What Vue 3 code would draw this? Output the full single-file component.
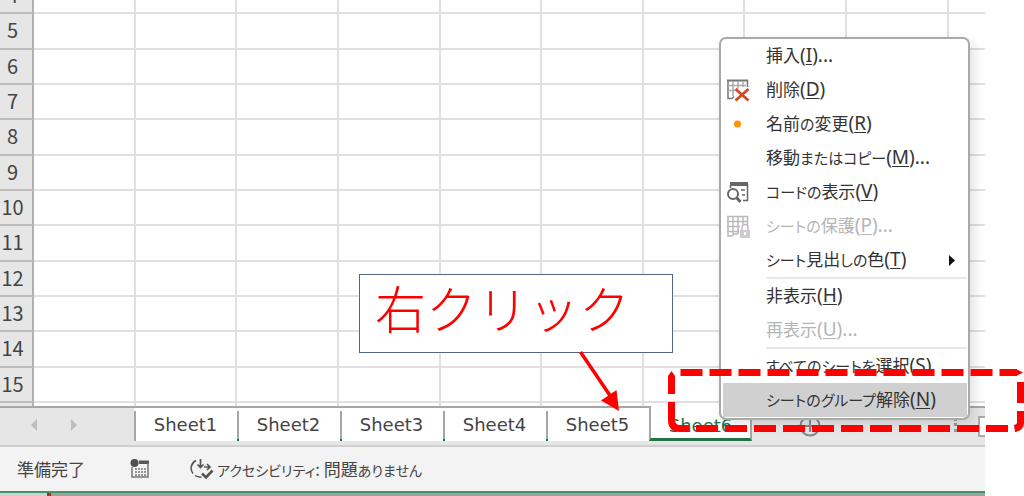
<template>
    <div class="page">
        <div class="excel-window">
            <!-- シート -->
            <div class="sheet">
                <table class="grid">
                    <colgroup>
                        <col class="col-header" />
                        <col v-for="c in 9" :key="c" class="col-cell" />
                        <col />
                    </colgroup>
                    <tbody>
                        <tr v-for="row in rows" :key="row">
                            <th scope="row">{{ row }}</th>
                            <td v-for="c in 10" :key="c"></td>
                        </tr>
                    </tbody>
                </table>
            </div>

            <!-- シート見出し -->
            <div class="tab-bar">
                <div class="tab-nav">
                    <button aria-label="前へ"><svg width="6" height="12"><path d="M6 0V12L0 6Z" fill="#bdbdbd" /></svg></button>
                    <button aria-label="次へ"><svg width="6" height="12"><path d="M0 0V12L6 6Z" fill="#bdbdbd" /></svg></button>
                </div>
                <button v-for="tab in tabs" :key="tab" class="tab" :class="{ active: tab === activeTab }" @click="activeTab = tab">{{ tab }}</button>
                <button class="add-tab" aria-label="新しいシート">
                    <svg width="22" height="22" fill="none" stroke="#888" stroke-width="2">
                        <circle cx="11" cy="11" r="9.5" />
                        <path d="M11 5V17M5 11H17" />
                    </svg>
                </button>
                <svg class="dots" width="3" height="14" fill="#999">
                    <path d="M0 0h3v3H0zM0 5h3v3H0zM0 11h3v3H0z" />
                </svg>
                <div class="scroll-end"></div>
            </div>

            <!-- ステータスバー -->
            <div class="status-bar">
                <span class="ready">準備完了</span>
                <svg class="macro-icon" width="20" height="20" viewBox="0 0 20 20">
                    <path d="M9 1.5H19V5H9Z" fill="#555" />
                    <path d="M2 8V18H18V4" fill="none" stroke="#777" stroke-width="1.5" />
                    <path d="M5 10H16M5 13H16M5 16H16" stroke="#777" stroke-width="1.5" stroke-dasharray="2 1" />
                    <circle cx="4.5" cy="4" r="4" fill="#505050" />
                </svg>
                <svg class="access-icon" width="24" height="22" viewBox="0 0 24 22" fill="none" stroke="#555">
                    <path d="M6 2.5A8.5 8.5 0 0 0 3 15.5M5 17.5Q8 19.5 11.5 19" stroke-width="1.5" />
                    <path d="M10.5 1V9M7.5 6.5L10.5 9.5L13.5 6.5M14 9H20M17 6L20 9L17 12" stroke-width="1.7" />
                    <path d="M12 15.5L16 19.5L22.5 12.5" stroke-width="2.6" />
                </svg>
                <span><span v-for="(part, i) in splitKana('アクセシビリティ: 問題ありません')" :key="i" :class="{ kana: part.kana }">{{ part.text }}</span></span>
            </div>
            <div class="desktop-strip"><i></i><b></b></div>
        </div>

        <!-- 右クリックメニュー -->
        <div class="context-menu" role="menu">
            <template v-for="item in menuItems" :key="item.key">
                <hr v-if="item.separator" />
                <button role="menuitem" class="menu-item" :class="{ selected: item.selected }" :disabled="item.disabled">
                    <span class="menu-icon">
                        <svg v-if="item.icon === 'delete'" width="24" height="24" viewBox="0 0 24 24" fill="none">
                            <path d="M1 2.5H22" stroke="#777" stroke-width="2" />
                            <path d="M2 2V20.5H6L8 18.5M21.5 2V9" stroke="#777" stroke-width="1.5" />
                            <path d="M2 7.5H20M2 12.5H9M7 3V18M12 3V11M17 3V9" stroke="#aaa" stroke-width="1.5" />
                            <path d="M9.5 11L22.5 22.5M22.5 11L9.5 22.5" stroke="#d24726" stroke-width="2.8" />
                        </svg>
                        <svg v-else-if="item.icon === 'dot'" width="24" height="24" viewBox="0 0 24 24">
                            <circle cx="11.5" cy="12" r="3.5" fill="#ff9200" />
                        </svg>
                        <svg v-else-if="item.icon === 'code'" width="24" height="24" viewBox="0 0 24 24" fill="none" stroke="#666">
                            <path d="M4 4H22" stroke-width="4" />
                            <path d="M21.5 4V20.5H17M4.5 5V8M15 10H19M16 15H19" stroke-width="1.5" />
                            <circle cx="7" cy="14" r="5" stroke-width="2" />
                            <path d="M10.5 17.5L14.5 22" stroke-width="3" />
                        </svg>
                        <svg v-else-if="item.icon === 'protect'" width="24" height="24" viewBox="0 0 24 24" fill="none" stroke="#bcb7bd">
                            <path d="M1 2.5H22M1 7.5H22M1 12.5H14M1 17.5H13M2 2V22H6L8 20H12M7 2V20M12 2V20M17 2V10M21.5 2V11" stroke-width="1.5" />
                            <path d="M16 16V13.5A3 3 0 0 1 22 13.5V16" stroke-width="1.5" />
                            <rect x="14" y="16" width="10" height="8" fill="#cfc9d0" stroke="none" />
                            <path d="M19 18V21" stroke="#fff" stroke-width="2" />
                        </svg>
                    </span>
                    <span class="menu-label"><span v-for="(part, i) in splitKana(item.label)" :key="i" :class="{ kana: part.kana }">{{ part.text }}</span><span class="access-key">(<u>{{ item.key }}</u>){{ item.dots ? '...' : '' }}</span></span>
                    <svg v-if="item.submenu" class="submenu-arrow" width="6" height="11"><path d="M0 0V11L6 5.5Z" fill="#111" /></svg>
                </button>
            </template>
        </div>

        <!-- 説明の吹き出し -->
        <div class="callout">右クリック</div>
        <svg class="annotations" width="1024" height="496" viewBox="0 0 1024 496" fill="none" stroke="#f00">
            <path d="M580.5 352L611 397" stroke-width="3.5" />
            <path d="M619 411L616.5 390L601 400.5Z" fill="#f00" stroke="none" />
            <g stroke-width="7">
                <path d="M680.5 372.5H1017" stroke-dasharray="22 7" />
                <path d="M696 428.5H1008" stroke-dasharray="22 7" />
                <path d="M1020.5 382V403M1020.5 411V423Q1020.5 427.5 1014.5 428.5" />
                <path d="M671.5 394V376M671.5 402V420Q671.5 428.5 680 428.5H689" />
            </g>
            <path d="M668 376L671.5 371L675 376ZM1016 369L1023 372.5L1016 376Z" fill="#f00" stroke="none" />
        </svg>
    </div>
</template>

<script setup>
import { ref } from 'vue';

// 表示する行番号
const rows = [4, 5, 6, 7, 8, 9, 10, 11, 12, 13, 14, 15, ''];

const tabs = ['Sheet1', 'Sheet2', 'Sheet3', 'Sheet4', 'Sheet5', 'Sheet6'];
const activeTab = ref('Sheet6');

// メニュー項目
const menuItems = [
    { label: '挿入', key: 'I', dots: true },
    { label: '削除', key: 'D', icon: 'delete' },
    { label: '名前の変更', key: 'R', icon: 'dot' },
    { label: '移動またはコピー', key: 'M', dots: true },
    { label: 'コードの表示', key: 'V', icon: 'code' },
    { label: 'シートの保護', key: 'P', icon: 'protect', dots: true, disabled: true },
    { label: 'シート見出しの色', key: 'T', submenu: true },
    { label: '非表示', key: 'H', separator: true },
    { label: '再表示', key: 'U', dots: true, disabled: true },
    { label: 'すべてのシートを選択', key: 'S', separator: true },
    { label: 'シートのグループ解除', key: 'N', selected: true },
];

// かなと漢字を分ける（かなは少し小さく表示する）
const splitKana = (text) => {
    return text.match(/[ぁ-ヿ]+|[^ぁ-ヿ]+/g).map((t) => ({ text: t, kana: /[ぁ-ヿ]/.test(t) }));
};
</script>

<style>
body {
    background: #fff;
    overflow: hidden;
}
</style>

<style scoped>
.page {
    position: relative;
    font-family: "Noto Sans CJK JP", sans-serif;
    font-size: 17px;
    color: #333;
}

button {
    font: inherit;
    color: inherit;
    background: none;
    border: none;
    padding: 0;
}

svg {
    display: block;
}

.kana {
    font-size: 15px;
}

.excel-window {
    margin-right: 39px;
}

.sheet {
    height: 406px;
    overflow: hidden;
}

.grid {
    width: 100%;
    margin-top: -21px;
    table-layout: fixed;
    border-collapse: separate;
    border-spacing: 0;
}

.col-header {
    width: 34px;
}

.col-cell {
    width: 10.32%;
}

.grid tr {
    height: 35px;
}

.grid tr:nth-child(3n + 2) {
    height: 36px;
}

.grid th,
.grid td {
    box-sizing: border-box;
    padding: 0;
    border-right: 2px solid #e0e0e0;
    border-bottom: 2px solid #e0e0e0;
}

.grid td:last-child {
    border-right: none;
}

.grid th {
    padding: 0 7px 2px 0;
    background: #e6e6e6;
    border-right-color: #b0b0b0;
    border-bottom-color: #bcbcbc;
    font-size: 20px;
    font-weight: 400;
    line-height: 28px;
    color: #444;
}

.tab-bar {
    display: flex;
    align-items: flex-start;
    height: 37px;
    border-top: 2px solid #a6a6a6;
    border-bottom: 2px solid #cfcfcf;
    background: #e6e6e6;
}

.tab-nav {
    display: flex;
    gap: 34px;
    width: 103px;
    padding: 11px 0 0 31px;
}

.tab {
    position: relative;
    width: 103px;
    height: 33px;
    background: #fff;
    font-family: "DejaVu Sans", sans-serif;
    font-size: 18px;
    line-height: 33px;
    color: #444;
}

/* 見出しの区切り線 */
.tab::before {
    content: "";
    position: absolute;
    left: 0;
    top: 3px;
    bottom: 0;
    width: 2px;
    background: linear-gradient(#a6a6a6 28px, #217346 28px);
}

.tab:nth-child(2)::before {
    background: #a6a6a6;
}

.tab.active {
    height: 35px;
    margin-top: -2px;
    padding-top: 3px;
    border-left: 2px solid #a6a6a6;
    border-right: 2px solid #a6a6a6;
    border-bottom: 3px solid #217346;
    color: #217346;
}

.tab.active::before {
    display: none;
}

.add-tab {
    margin: 7px 0 0 47px;
}

.dots {
    margin: 10px 21px 0 auto;
}

.scroll-end {
    width: 5px;
    height: 17px;
    margin-top: 8px;
    border: 2px solid #ababab;
    border-right: none;
    background: #fff;
}

.status-bar {
    display: flex;
    align-items: center;
    height: 44px;
    padding-left: 17px;
    border-bottom: 2px solid #439467;
    background: #f3f3f3;
    font-feature-settings: "palt";
    line-height: 24px;
    color: #444;
}

.status-bar .kana {
    font-size: 14px;
}

.macro-icon {
    margin-left: 45px;
}

.access-icon {
    margin: 0 3px 0 40px;
}

.desktop-strip {
    display: flex;
    height: 3px;
    background: #a0a0a0;
}

.desktop-strip i {
    width: 47px;
    background: #d0d0d0;
}

.desktop-strip b {
    width: 4px;
    background: #a93416;
}

.context-menu {
    position: absolute;
    left: 719px;
    top: 37px;
    width: 247px;
    padding-bottom: 1px;
    border: 2px solid #a9a9a9;
    border-radius: 7px;
    background: #fff;
    box-shadow: 4px 4px 12px rgba(0, 0, 0, 0.12);
}

.context-menu hr {
    height: 2px;
    margin: 0 1px 0 45px;
    border: none;
    background: #e8e8e8;
}

.menu-item {
    display: flex;
    align-items: center;
    width: 100%;
    height: 34px;
    font-feature-settings: "palt";
    line-height: 32px;
    text-align: left;
    white-space: nowrap;
}

.menu-item:disabled {
    color: #b5b5b5;
}

.menu-item.selected {
    width: calc(100% - 3px);
    margin-left: 2px;
    background: #d0d0d0;
}

.menu-icon {
    width: 40px;
    padding-left: 5px;
}

.menu-item.selected .menu-icon {
    padding-left: 3px;
}

.menu-label {
    padding-bottom: 2px;
}

.access-key {
    font-family: "Noto Sans", sans-serif;
    font-size: 19px;
}

.menu-item u {
    text-underline-offset: 2px;
}

.submenu-arrow {
    margin: 0 13px 0 auto;
}

.callout {
    position: absolute;
    left: 359px;
    top: 274px;
    width: 297px;
    padding: 0 0 12px 15px;
    border: 1px solid #536484;
    background: #fff;
    font-size: 51px;
    font-weight: 300;
    line-height: 65px;
    white-space: nowrap;
    color: #f00;
}

.annotations {
    position: absolute;
    left: 0;
    top: 0;
    pointer-events: none;
}
</style>
